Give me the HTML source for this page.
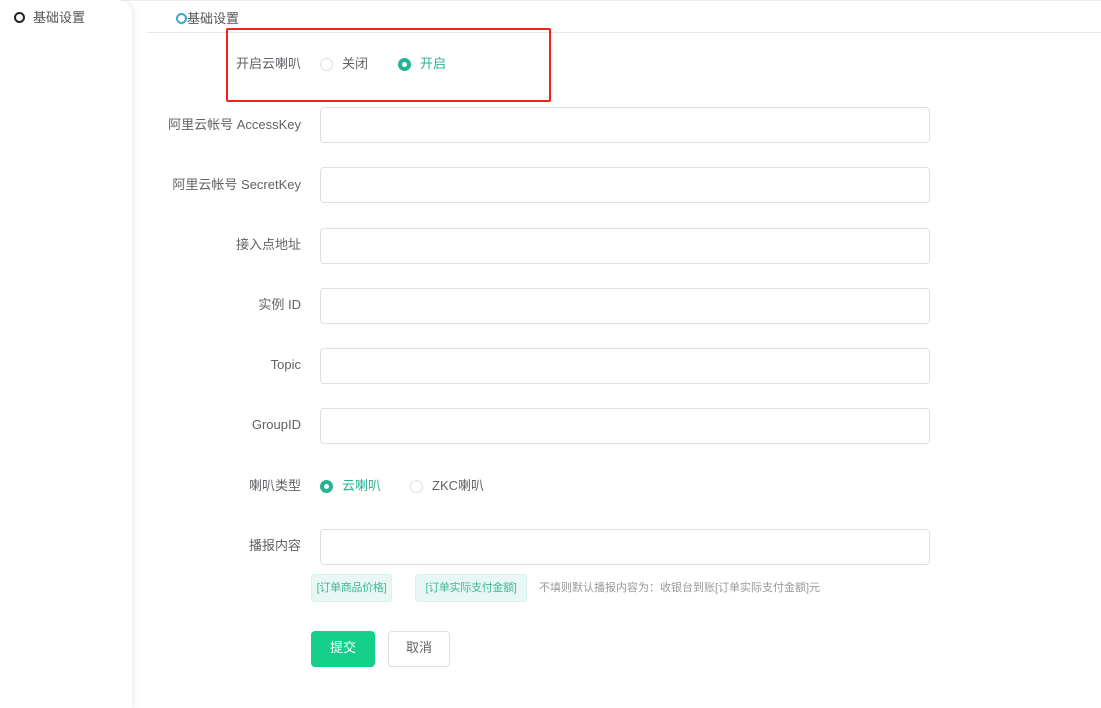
<!DOCTYPE html>
<html><head><meta charset="utf-8"><style>
*{margin:0;padding:0;box-sizing:border-box}
body{width:1101px;height:708px;background:#fff;font-family:"Liberation Sans","Noto Sans CJK SC",sans-serif;position:relative;overflow:hidden;color:#606266;font-size:13px}
.a{position:absolute;line-height:16px}
.side{left:0;top:0;width:132px;height:708px;background:#fff;border-top-right-radius:14px;box-shadow:2px 0 6px rgba(0,0,0,.08)}
.lab{position:absolute;right:800px;text-align:right;font-size:13px;line-height:16px;color:#606266;white-space:nowrap}
.inp{position:absolute;left:320px;width:610px;height:36px;border:1px solid #dcdfe6;border-radius:4px;background:#fff}
.rad{position:absolute;width:13px;height:13px;border-radius:50%;border:1px solid #dcdfe6;background:#fff}
.radon{border:4px solid #26b393;background:#fff}
.tag{position:absolute;top:574px;height:28px;line-height:26px;border:1px solid #d6f2ec;background:#e8f7f4;color:#3fb899;border-radius:3px;font-size:11px;text-align:center;white-space:nowrap}
</style></head><body>
<div class="a" style="left:0;top:0;width:1101px;height:1px;background:#eee"></div>
<div class="a side"></div>
<div class="a" style="left:14px;top:12px;width:11px;height:11px;border:2px solid #222;border-radius:50%"></div>
<div class="a" style="left:33px;top:10px;font-size:13px;color:#555">基础设置</div>
<div class="a" style="left:147px;top:32px;width:954px;height:1px;background:#e6e6e6"></div>
<div class="a" style="left:176px;top:13px;width:11px;height:11px;border:2px solid #3aa8c8;border-radius:50%"></div>
<div class="a" style="left:187px;top:11px;font-size:13px;color:#555">基础设置</div>
<div class="a" style="left:226px;top:28px;width:325px;height:74px;border:2px solid #f5221b;border-radius:2px"></div>
<div class="lab" style="top:56px">开启云喇叭</div>
<div class="rad" style="left:320px;top:58px"></div><div class="a" style="left:342px;top:56px">关闭</div>
<div class="rad radon" style="left:398px;top:58px"></div><div class="a" style="left:420px;top:56px;color:#26b393">开启</div>
<div class="lab" style="top:117px">阿里云帐号 AccessKey</div><div class="inp" style="top:107px"></div>
<div class="lab" style="top:177px">阿里云帐号 SecretKey</div><div class="inp" style="top:167px"></div>
<div class="lab" style="top:237px">接入点地址</div><div class="inp" style="top:228px"></div>
<div class="lab" style="top:297px">实例 ID</div><div class="inp" style="top:288px"></div>
<div class="lab" style="top:357px">Topic</div><div class="inp" style="top:348px"></div>
<div class="lab" style="top:417px">GroupID</div><div class="inp" style="top:408px"></div>
<div class="lab" style="top:478px">喇叭类型</div>
<div class="rad radon" style="left:320px;top:480px"></div><div class="a" style="left:342px;top:478px;color:#26b393">云喇叭</div>
<div class="rad" style="left:410px;top:480px"></div><div class="a" style="left:432px;top:478px">ZKC喇叭</div>
<div class="lab" style="top:538px">播报内容</div><div class="inp" style="top:529px"></div>
<div class="tag" style="left:311px;width:81px;letter-spacing:-0.3px">[订单商品价格]</div>
<div class="tag" style="left:415px;width:112px;letter-spacing:-0.3px">[订单实际支付金额]</div>
<div class="a" style="left:539px;top:580px;font-size:11px;color:#999">不填则默认播报内容为：收银台到账[订单实际支付金额]元</div>
<div class="a" style="left:311px;top:631px;width:64px;height:36px;background:#14d08a;border-radius:4px;color:#fff;text-align:center;line-height:34px">提交</div>
<div class="a" style="left:388px;top:631px;width:62px;height:36px;border:1px solid #dcdfe6;border-radius:4px;color:#606266;text-align:center;line-height:32px">取消</div>
</body></html>
